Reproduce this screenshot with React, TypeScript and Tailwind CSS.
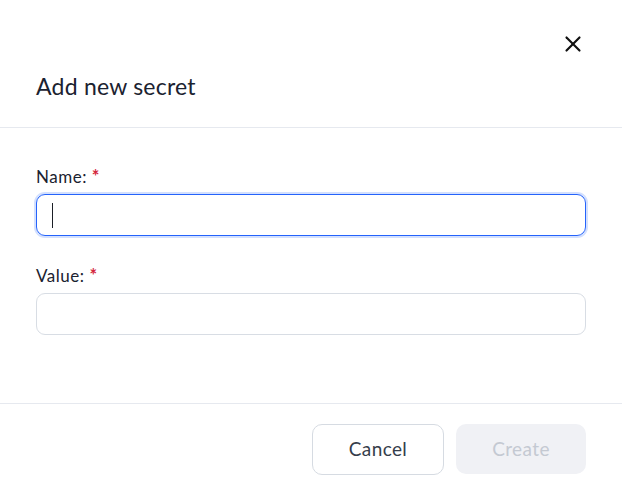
import { X } from "lucide-react";

function Label({ text }: { text: string }) {
  return (
    <div className="h-6 text-[17px] leading-6 tracking-[0.03em] text-[#1b2230]">
      {text} <span className="text-[18px] leading-none font-bold text-[#d4273c]">*</span>
    </div>
  );
}

export default function App() {
  return (
    <div
      className="w-[622px] h-[496px] bg-white flex flex-col"
      style={{ fontFamily: "Lato, 'Open Sans', sans-serif" }}
    >
      <div className="px-9 pt-[37px] pb-[27px] border-b border-[#e6e9ef]">
        <div className="flex justify-end h-[13px]">
          <button className="text-[#111] -mt-[6px]">
            <X className="w-[26px] h-[26px]" strokeWidth={2} />
          </button>
        </div>
        <h2 className="mt-[22px] text-[23px] leading-7 tracking-[0.01em] text-[#1b2230]">Add new secret</h2>
      </div>

      <div className="flex-1 px-9 pt-[37px] border-b border-[#e6e9ef]">
        <Label text="Name:" />
        <div className="mt-[5px] h-[42px] rounded-[9px] border border-[#2563fb] shadow-[0_0_0_2px_#d3e0fe] flex items-center pl-[15px]">
          <span className="w-px h-[25px] bg-[#1b1f27]" />
        </div>
        <div className="mt-[28px]">
          <Label text="Value:" />
        </div>
        <input className="mt-[5px] w-full h-[42px] rounded-[9px] border border-[#d8dde4] outline-none px-[15px]" />
      </div>

      <div className="h-[92px] px-9 pt-[20px] flex justify-end gap-3">
        <button className="w-[132px] h-[51px] rounded-[10px] border border-[#d6dbe2] text-[19px] tracking-[0.02em] text-[#353d4b]">
          Cancel
        </button>
        <button className="w-[130px] h-[50px] rounded-[10px] bg-[#f0f1f5] text-[19px] tracking-[0.02em] text-[#c4c9d2]" disabled>
          Create
        </button>
      </div>
    </div>
  );
}
